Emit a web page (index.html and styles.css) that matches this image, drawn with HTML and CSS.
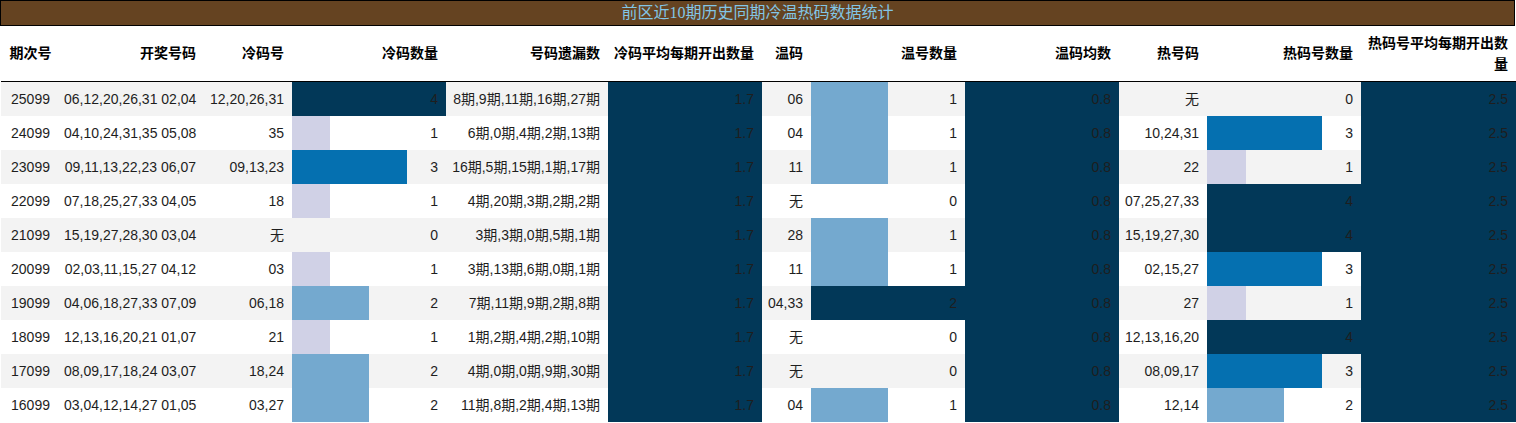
FILE: index.html
```html
<!DOCTYPE html>
<html lang="zh-CN">
<head>
<meta charset="utf-8">
<title>前区近10期历史同期冷温热码数据统计</title>
<link rel="stylesheet" href="styles.css">
</head>
<body>
<div class="sheet">
  <div class="title">前区近10期历史同期冷温热码数据统计</div>
  <table class="stats">
    <colgroup>
      <col class="w59"><col class="w144"><col class="w88"><col class="w154"><col class="w162"><col class="w154"><col class="w49"><col class="w154"><col class="w154"><col class="w88"><col class="w154"><col class="w155">
    </colgroup>
    <thead>
      <tr>
        <th class="c">期次号</th>
        <th>开奖号码</th>
        <th>冷码号</th>
        <th>冷码数量</th>
        <th>号码遗漏数</th>
        <th>冷码平均每期开出数量</th>
        <th>温码</th>
        <th>温号数量</th>
        <th>温码均数</th>
        <th>热号码</th>
        <th>热码号数量</th>
        <th>热码号平均每期开出数量</th>
      </tr>
    </thead>
    <tbody>
      <tr><td class="c">25099</td><td>06,12,20,26,31 02,04</td><td>12,20,26,31</td><td class="p100">4</td><td>8期,9期,11期,16期,27期</td><td class="p100">1.7</td><td>06</td><td class="p50">1</td><td class="p100">0.8</td><td>无</td><td>0</td><td class="p100">2.5</td></tr>
      <tr><td class="c">24099</td><td>04,10,24,31,35 05,08</td><td>35</td><td class="p25">1</td><td>6期,0期,4期,2期,13期</td><td class="p100">1.7</td><td>04</td><td class="p50">1</td><td class="p100">0.8</td><td>10,24,31</td><td class="p75">3</td><td class="p100">2.5</td></tr>
      <tr><td class="c">23099</td><td>09,11,13,22,23 06,07</td><td>09,13,23</td><td class="p75">3</td><td>16期,5期,15期,1期,17期</td><td class="p100">1.7</td><td>11</td><td class="p50">1</td><td class="p100">0.8</td><td>22</td><td class="p25">1</td><td class="p100">2.5</td></tr>
      <tr><td class="c">22099</td><td>07,18,25,27,33 04,05</td><td>18</td><td class="p25">1</td><td>4期,20期,3期,2期,2期</td><td class="p100">1.7</td><td>无</td><td>0</td><td class="p100">0.8</td><td>07,25,27,33</td><td class="p100">4</td><td class="p100">2.5</td></tr>
      <tr><td class="c">21099</td><td>15,19,27,28,30 03,04</td><td>无</td><td>0</td><td>3期,3期,0期,5期,1期</td><td class="p100">1.7</td><td>28</td><td class="p50">1</td><td class="p100">0.8</td><td>15,19,27,30</td><td class="p100">4</td><td class="p100">2.5</td></tr>
      <tr><td class="c">20099</td><td>02,03,11,15,27 04,12</td><td>03</td><td class="p25">1</td><td>3期,13期,6期,0期,1期</td><td class="p100">1.7</td><td>11</td><td class="p50">1</td><td class="p100">0.8</td><td>02,15,27</td><td class="p75">3</td><td class="p100">2.5</td></tr>
      <tr><td class="c">19099</td><td>04,06,18,27,33 07,09</td><td>06,18</td><td class="p50">2</td><td>7期,11期,9期,2期,8期</td><td class="p100">1.7</td><td>04,33</td><td class="p100">2</td><td class="p100">0.8</td><td>27</td><td class="p25">1</td><td class="p100">2.5</td></tr>
      <tr><td class="c">18099</td><td>12,13,16,20,21 01,07</td><td>21</td><td class="p25">1</td><td>1期,2期,4期,2期,10期</td><td class="p100">1.7</td><td>无</td><td>0</td><td class="p100">0.8</td><td>12,13,16,20</td><td class="p100">4</td><td class="p100">2.5</td></tr>
      <tr><td class="c">17099</td><td>08,09,17,18,24 03,07</td><td>18,24</td><td class="p50">2</td><td>4期,0期,0期,9期,30期</td><td class="p100">1.7</td><td>无</td><td>0</td><td class="p100">0.8</td><td>08,09,17</td><td class="p75">3</td><td class="p100">2.5</td></tr>
      <tr><td class="c">16099</td><td>03,04,12,14,27 01,05</td><td>03,27</td><td class="p50">2</td><td>11期,8期,2期,4期,13期</td><td class="p100">1.7</td><td>04</td><td class="p50">1</td><td class="p100">0.8</td><td>12,14</td><td class="p50">2</td><td class="p100">2.5</td></tr>
    </tbody>
  </table>
</div>
</body>
</html>
```
FILE: styles.css
```css
html, body {
  margin: 0;
  padding: 0;
  background: #ffffff;
}

.sheet {
  width: 1516px;
  font-family: "Liberation Sans", "Noto Sans CJK SC", sans-serif;
  color: #1e1e1e;
}

.title {
  box-sizing: border-box;
  width: 1515px;
  height: 26px;
  border: 1px solid #000;
  background: #654321;
  color: #82c6e6;
  font-family: "Liberation Serif", "Noto Sans CJK SC", serif;
  font-size: 16px;
  line-height: 24px;
  text-align: center;
}

.stats {
  margin-left: 1px;
  table-layout: fixed;
  width: 1515px;
  border-collapse: separate;
  border-spacing: 0;
  font-size: 14px;
}

.w59 { width: 59px; }
.w144 { width: 144px; }
.w88 { width: 88px; }
.w154 { width: 154px; }
.w162 { width: 162px; }
.w49 { width: 49px; }
.w155 { width: 155px; }

.stats th {
  box-sizing: border-box;
  height: 56px;
  padding: 0 8px 0 4px;
  border-bottom: 1px solid #000;
  font-weight: bold;
  font-size: 14px;
  line-height: 21px;
  text-align: right;
  vertical-align: middle;
  color: #000;
  background: #fff;
}

.stats td {
  box-sizing: border-box;
  height: 34px;
  padding: 0 8px 0 4px;
  text-align: right;
  vertical-align: middle;
  white-space: nowrap;
  line-height: 20px;
}

.stats th.c,
.stats td.c {
  text-align: center;
  padding: 0 4px;
}

.stats tbody tr:nth-child(odd) { background: #f3f3f3; }
.stats tbody tr:nth-child(even) { background: #ffffff; }

.stats td.p25 { background: linear-gradient(to right, #d0d1e6 25%, transparent 25%); }
.stats td.p50 { background: linear-gradient(to right, #74a9cf 50%, transparent 50%); }
.stats td.p75 { background: linear-gradient(to right, #0570b0 75%, transparent 75%); }
.stats td.p100 { background: #023858; }
```
